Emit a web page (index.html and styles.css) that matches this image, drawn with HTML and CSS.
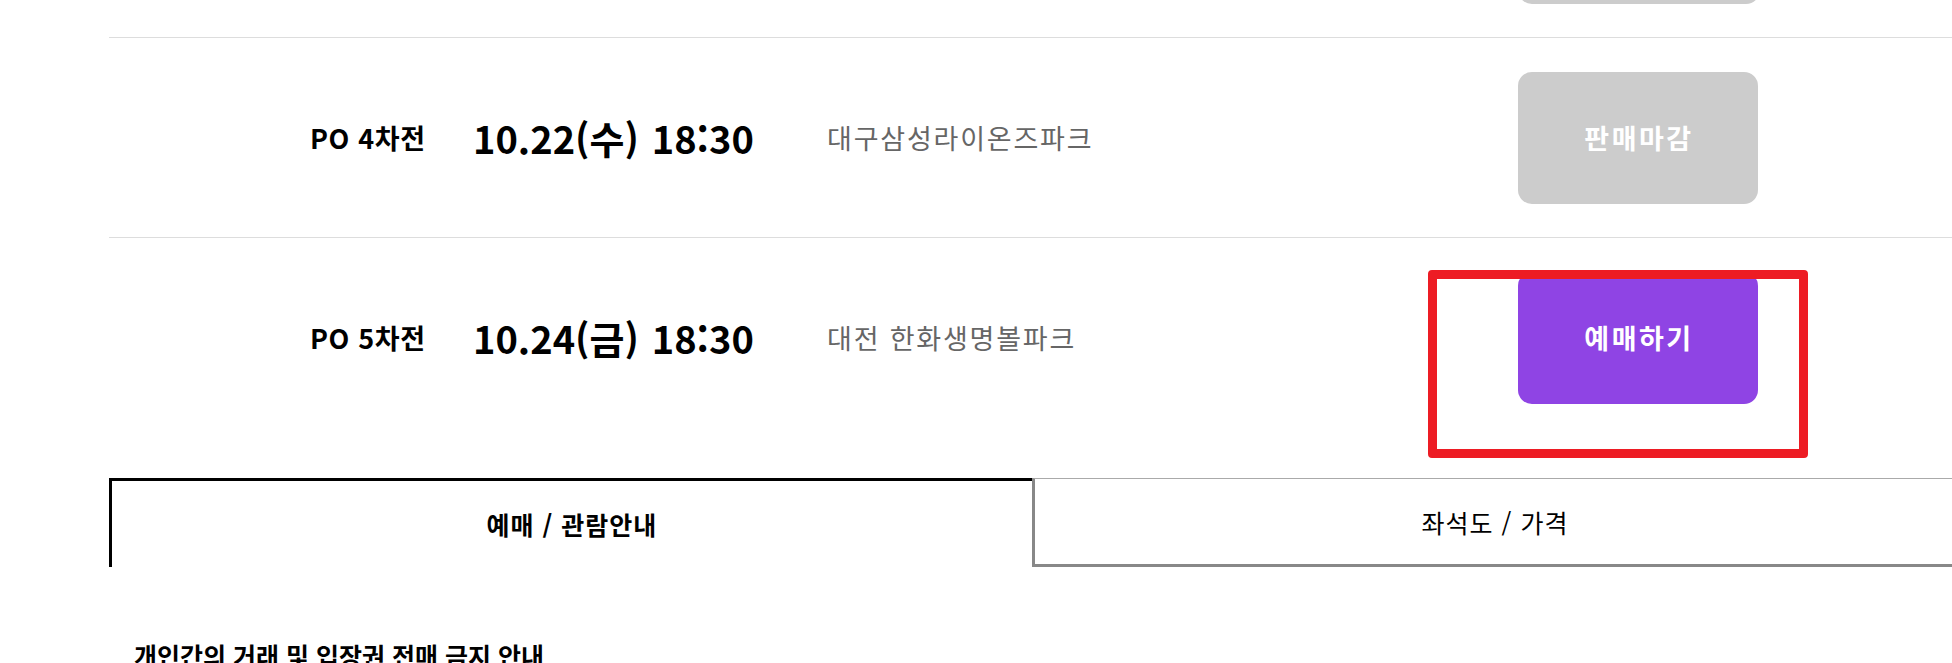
FILE: index.html
```html
<!DOCTYPE html>
<html lang="ko">
<head>
<meta charset="utf-8">
<title>플레이오프 예매</title>
<link rel="stylesheet" href="styles.css">
</head>
<body>
<div class="page">
  <div class="schedule">
    <div class="game">
      <span></span>
      <span></span>
      <span></span>
      <span></span>
      <span class="btn btn-closed"></span>
    </div>
    <div class="game">
      <span></span>
      <span class="round">PO 4차전</span>
      <span class="date">10.22(수)<span class="time">18:30</span></span>
      <span class="venue">대구삼성라이온즈파크</span>
      <button class="btn btn-closed">판매마감</button>
    </div>
    <div class="game">
      <span></span>
      <span class="round">PO 5차전</span>
      <span class="date">10.24(금)<span class="time">18:30</span></span>
      <span class="venue">대전 한화생명볼파크</span>
      <button class="btn btn-open">예매하기</button>
    </div>
  </div>
  <div class="tabs">
    <div class="tab tab-active">예매 / 관람안내</div>
    <div class="tab">좌석도 / 가격</div>
  </div>
  <div class="notice">
    <h3 class="notice-title">개인간의 거래 및 입장권 전매 금지 안내</h3>
  </div>
  <div class="annotation"></div>
</div>
</body>
</html>
```
FILE: styles.css
```css
html, body {
  margin: 0;
  padding: 0;
  background: #fff;
  overflow: hidden;
}
body {
  font-family: "Noto Sans CJK KR", "Noto Sans", sans-serif;
  color: #000;
}
.page {
  position: relative;
  display: flow-root;
  padding-left: 109px;
}
.schedule {
  margin-top: -162px;
}
.game {
  display: grid;
  grid-template-columns: 201px 163px 354px 691px 240px;
  align-items: center;
  height: 199px;
  border-bottom: 1px solid #dddddd;
}
.game:last-child {
  border-bottom: none;
}
.round {
  font-size: 27px;
  letter-spacing: 0.6px;
  font-weight: 700;
  white-space: nowrap;
}
.date {
  font-size: 38px;
  font-weight: 700;
  white-space: nowrap;
}
.time {
  margin-left: 13px;
}
.venue {
  font-size: 27px;
  letter-spacing: 1.8px;
  color: #666666;
  white-space: nowrap;
}
.btn {
  display: flex;
  align-items: center;
  justify-content: center;
  width: 240px;
  height: 132px;
  border: none;
  border-radius: 14px;
  font-family: inherit;
  font-size: 27px;
  letter-spacing: 2.5px;
  font-weight: 700;
  color: #fff;
  padding: 0 0 0 2px;
}
.btn-closed {
  background: #cccccc;
}
.btn-open {
  background: #8f44e4;
}
.tabs {
  display: flex;
  margin-top: 41px;
}
.tab {
  flex: 0 0 923px;
  height: 89px;
  box-sizing: border-box;
  display: flex;
  align-items: center;
  justify-content: center;
  font-size: 25px;
  letter-spacing: 1px;
  border-top: 1px solid #aaaaaa;
  border-left: 3px solid #888888;
  border-bottom: 3px solid #888888;
}
.tab-active {
  font-weight: 700;
  border-top: 3px solid #000;
  border-left: 3px solid #000;
  border-bottom: none;
}
.notice {
  padding: 70px 0 0 25px;
}
.notice-title {
  margin: 0;
  font-size: 25px;
  line-height: 36px;
  font-weight: 700;
}
.annotation {
  position: absolute;
  left: 1428px;
  top: 270px;
  width: 380px;
  height: 188px;
  box-sizing: border-box;
  border: 9px solid #ed1c24;
  border-radius: 4px;
}
```
